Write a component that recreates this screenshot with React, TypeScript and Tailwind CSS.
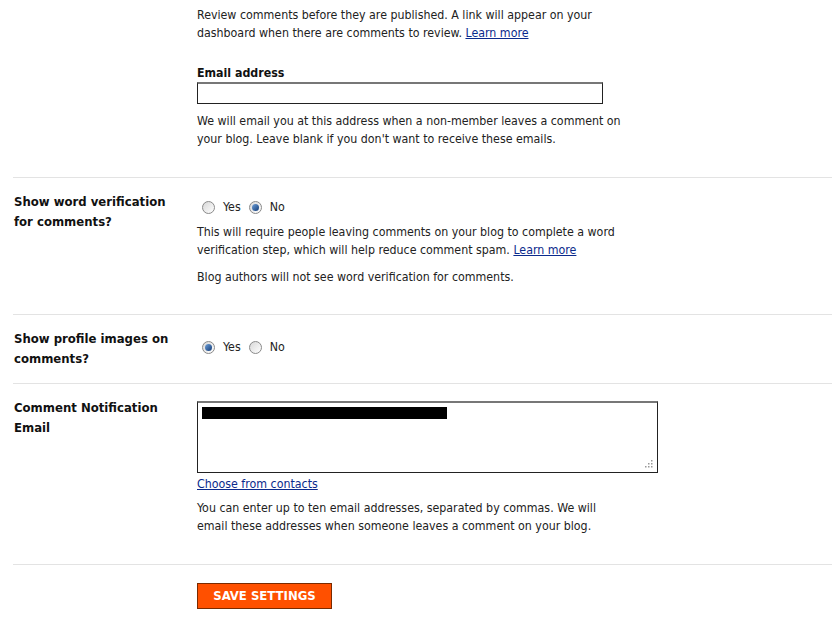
const font = { fontFamily: '"DejaVu Sans Condensed", "DejaVu Sans", sans-serif' };

type RadioProps = { label: string; checked?: boolean };

const Radio = ({ label, checked }: RadioProps) => {
  return (
    <label className="flex items-center">
      <span className="relative flex h-[13px] w-[13px] items-center justify-center rounded-full border border-[#8a8a8a] bg-gradient-to-br from-[#d8d8d8] to-white">
        {checked && (
          <span className="h-[7px] w-[7px] rounded-full bg-gradient-to-br from-[#6fa0d8] to-[#123c78]" />
        )}
      </span>
      <span className="ml-[8px]">{label}</span>
    </label>
  );
};

const Row = ({
  label,
  children,
  className,
}: {
  label?: React.ReactNode;
  children: React.ReactNode;
  className?: string;
}) => {
  return (
    <div className={`ml-[13px] flex border-t border-[#e3e3e3] ${className ?? ''}`}>
      <div className="w-[184px] shrink-0 pl-[1px] text-[13px] font-bold leading-[20px] text-[#111]">
        {label}
      </div>
      <div className="flex-1">{children}</div>
    </div>
  );
};

export default function App() {
  return (
    <div className="min-h-[626px] w-[832px] overflow-hidden bg-white text-[12.3px] leading-[18px] text-[#222]" style={font}>
      {/* comment moderation continuation */}
      <div className="ml-[197px] pt-[6px] pb-[29px]">
        <p>
          Review comments before they are published. A link will appear on your
          <br />
          dashboard when there are comments to review.{' '}
          <a href="#" className="text-[#0b2a8c] underline">
            Learn more
          </a>
        </p>
        <div className="mt-[22px] font-bold text-[#111]">Email address</div>
        <input
          type="text"
          className="block h-[22px] w-[406px] border border-[#222] border-t-2 border-t-[#777] bg-white outline-none"
        />
        <p className="mt-[8px]">
          We will email you at this address when a non-member leaves a comment on
          <br />
          your blog. Leave blank if you don't want to receive these emails.
        </p>
      </div>

      <Row
        className="pt-[14px] pb-[28px]"
        label={
          <>
            Show word verification
            <br />
            for comments?
          </>
        }
      >
        <div className="mt-[5px] flex h-[20px] items-center gap-[8px] pl-[5px]">
          <Radio label="Yes" />
          <Radio label="No" checked />
        </div>
        <p className="mt-[6px]">
          This will require people leaving comments on your blog to complete a word
          <br />
          verification step, which will help reduce comment spam.{' '}
          <a href="#" className="text-[#0b2a8c] underline">
            Learn more
          </a>
        </p>
        <p className="mt-[9px]">Blog authors will not see word verification for comments.</p>
      </Row>

      <Row
        className="pt-[14px] pb-[14px]"
        label={
          <>
            Show profile images on
            <br />
            comments?
          </>
        }
      >
        <div className="mt-[8px] flex h-[20px] items-center gap-[8px] pl-[5px]">
          <Radio label="Yes" checked />
          <Radio label="No" />
        </div>
      </Row>

      <Row
        className="pt-[14px] pb-[29px]"
        label={
          <>
            Comment Notification
            <br />
            Email
          </>
        }
      >
        <div className="relative mt-[3px] h-[72px] w-[461px] border border-[#222] border-t-2 border-t-[#777] bg-white">
          <div className="ml-[4px] mt-[4px] h-[12px] w-[245px] bg-black" />
          <svg className="absolute right-[4px] bottom-[4px]" width="9" height="9" viewBox="0 0 9 9">
            <rect x="7" y="1" width="1.5" height="1.5" fill="#999" />
            <rect x="4" y="4" width="1.5" height="1.5" fill="#999" />
            <rect x="7" y="4" width="1.5" height="1.5" fill="#999" />
            <rect x="1" y="7" width="1.5" height="1.5" fill="#999" />
            <rect x="4" y="7" width="1.5" height="1.5" fill="#999" />
            <rect x="7" y="7" width="1.5" height="1.5" fill="#999" />
          </svg>
        </div>
        <a href="#" className="mt-[3px] block w-fit leading-[16px] text-[#0b2a8c] underline">
          Choose from contacts
        </a>
        <p className="mt-[7px]">
          You can enter up to ten email addresses, separated by commas. We will
          <br />
          email these addresses when someone leaves a comment on your blog.
        </p>
      </Row>

      <div className="ml-[13px] border-t border-[#e3e3e3] pt-[18px] pl-[184px]">
        <button className="h-[26px] w-[135px] border border-[#7a2a00] bg-[#ff5000] text-[13px] font-bold uppercase text-white">
          Save settings
        </button>
      </div>
    </div>
  );
}
